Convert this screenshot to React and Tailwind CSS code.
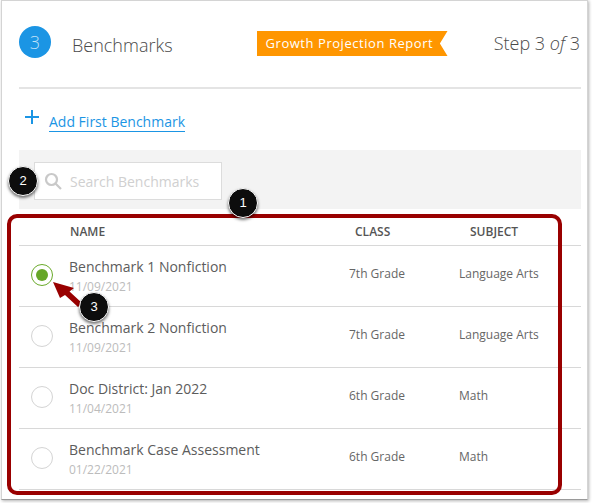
const rows = [
  { name: "Benchmark 1 Nonfiction", date: "11/09/2021", cls: "7th Grade", subject: "Language Arts", on: true },
  { name: "Benchmark 2 Nonfiction", date: "11/09/2021", cls: "7th Grade", subject: "Language Arts" },
  { name: "Doc District: Jan 2022", date: "11/04/2021", cls: "6th Grade", subject: "Math" },
  { name: "Benchmark Case Assessment", date: "01/22/2021", cls: "6th Grade", subject: "Math" },
];

function Badge({ n, className }) {
  return (
    <div className={`absolute w-[30px] h-[30px] rounded-full bg-[#0d0d0d] border border-white text-white text-[13px] flex items-center justify-center shadow-[0_2px_3px_rgba(0,0,0,0.55)] font-['Liberation_Sans',sans-serif] ${className}`}>
      {n}
    </div>
  );
}

export default function App() {
  return (
    <div className="relative w-[592px] h-[503px] bg-white overflow-hidden font-['Open_Sans',sans-serif]">
      <div className="w-[587px] h-[500px] ml-px bg-white border border-[#d4d4d4] border-b-[#9a9a9a] shadow-[1px_1px_3px_rgba(0,0,0,0.3)] pl-[17px] pr-[6px]">
        <div className="h-[88px] border-b-2 border-[#e4e4e4] flex items-start">
          <div className="mt-[25px] w-[32px] h-[32px] rounded-full bg-[#1b95e4] text-[#bfe0f7] text-[18px] font-light flex items-center justify-center shrink-0">3</div>
          <div className="ml-[21px] mt-[31px] text-[18px] leading-[26px] font-light text-[#4a4a4a]">Benchmarks</div>
          <div className="ml-[84px] mt-[30px] h-[25px] w-[191px] bg-[#ff9600] text-white text-[13px] tracking-[0.55px] pl-[9px] flex items-center [clip-path:polygon(0_0,100%_0,96%_50%,100%_100%,0_100%)]">Growth Projection Report</div>
          <div className="ml-auto mr-[1px] mt-[29px] text-[18px] leading-[26px] font-light text-[#4a4a4a] whitespace-nowrap">Step 3 <em className="italic">of</em> 3</div>
        </div>

        <div className="h-[61px] flex items-start pt-[18px]">
          <svg className="ml-[6px] mt-[3px]" width="14" height="14" viewBox="0 0 14 14"><path d="M7 0v14M0 7h14" stroke="#1b95e4" strokeWidth="2" /></svg>
          <a className="ml-[10px] text-[14px] leading-[17px] mt-[6px] text-[#1b95e4] border-b border-[#1b95e4] pb-px">Add First Benchmark</a>
        </div>

        <div className="h-[59px] bg-[#f3f3f3] pl-[15px] pt-[12px]">
          <div className="w-[188px] h-[38px] bg-white border border-[#dcdcdc] flex items-center pl-[9px]">
            <svg width="18" height="18" viewBox="0 0 18 18" fill="none" stroke="#c9c9c9" strokeWidth="2.2"><circle cx="7.5" cy="7.5" r="5.5" /><path d="M11.5 11.5 17 17" /></svg>
            <span className="ml-[8px] text-[14px] text-[#d0d0d0]">Search Benchmarks</span>
          </div>
        </div>

        <div className="h-[37px] flex items-center border-b border-[#d8d8d8] text-[12px] font-semibold text-[#555] pt-[10px]">
          <div className="w-[336px] pl-[51px]">NAME</div>
          <div className="w-[115px]">CLASS</div>
          <div>SUBJECT</div>
        </div>

        {rows.map((r) => (
          <div key={r.name} className="h-[61px] flex items-start border-b border-[#d8d8d8]">
            <div className="w-[50px] pl-[12px] pt-[18px] shrink-0">
              {r.on ? (
                <div className="w-[22px] h-[22px] rounded-full border border-[#6aaa2a] flex items-center justify-center">
                  <div className="w-[12px] h-[12px] rounded-full bg-[#66a628]" />
                </div>
              ) : (
                <div className="w-[22px] h-[22px] rounded-full border border-[#d4d4d4]" />
              )}
            </div>
            <div className="w-[280px] shrink-0 pt-[11px]">
              <div className="text-[14px] leading-[20px] text-[#5c5c5c]">{r.name}</div>
              <div className="text-[12px] leading-[20px] text-[#bcbcbc]">{r.date}</div>
            </div>
            <div className="w-[110px] shrink-0 text-[12px] leading-[18px] pt-[19px] text-[#666]">{r.cls}</div>
            <div className="text-[12px] leading-[18px] pt-[19px] text-[#666]">{r.subject}</div>
          </div>
        ))}
      </div>

      <div className="absolute left-[7px] top-[214px] w-[555px] h-[281px] border-[4px] border-[#990000] rounded-[10px]" />
      <svg className="absolute left-[50px] top-[279px]" width="40" height="32" viewBox="0 0 40 32">
        <path d="M3 3 L24 9 L19.5 12.5 L32 24 L28 28 L15 16 L10 19 Z" fill="#990000" />
      </svg>
      <Badge n="1" className="left-[228px] top-[188px]" />
      <Badge n="2" className="left-[8px] top-[166px]" />
      <Badge n="3" className="left-[79px] top-[292px]" />
    </div>
  );
}
